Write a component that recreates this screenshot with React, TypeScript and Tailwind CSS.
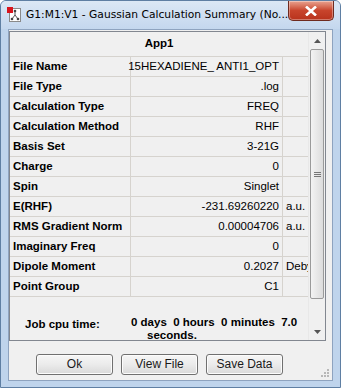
const rows: [string, string, string][] = [
  ["File Name", "15HEXADIENE_ ANTI1_OPT", ""],
  ["File Type", ".log", ""],
  ["Calculation Type", "FREQ", ""],
  ["Calculation Method", "RHF", ""],
  ["Basis Set", "3-21G", ""],
  ["Charge", "0", ""],
  ["Spin", "Singlet", ""],
  ["E(RHF)", "-231.69260220", "a.u."],
  ["RMS Gradient Norm", "0.00004706", "a.u."],
  ["Imaginary Freq", "0", ""],
  ["Dipole Moment", "0.2027", "Debye"],
  ["Point Group", "C1", ""],
];

function AppIcon() {
  return (
    <svg width="16" height="16" viewBox="0 0 16 16">
      <rect x="2.5" y="1.5" width="11" height="13" fill="#fff" stroke="#8a8a8a" />
      <line x1="8" y1="4" x2="8" y2="8" stroke="#555" />
      <line x1="8" y1="8" x2="5" y2="12" stroke="#555" />
      <line x1="8" y1="8" x2="11" y2="12" stroke="#555" />
      <circle cx="8" cy="4" r="1.3" fill="#444" />
      <circle cx="5" cy="12" r="1.3" fill="#444" />
      <circle cx="11" cy="12" r="1.3" fill="#444" />
      <rect x="0" y="0" width="6" height="6" fill="#d8141c" />
    </svg>
  );
}

function Btn({ label }: { label: string }) {
  return (
    <button className="w-[77px] h-[21px] rounded-[3px] border border-[#707070] bg-gradient-to-b from-[#f6f6f6] via-[#ebebeb] to-[#d9d9d9] text-[12px] text-[#1a1a1a] shadow-[inset_0_0_0_1px_#fcfcfc]">
      {label}
    </button>
  );
}

export default function App() {
  return (
    <div
      className="w-[341px] h-[388px] overflow-hidden bg-[#bfd4ec] flex flex-col rounded-t-[6px] border border-[#5f7fa3]"
      style={{ fontFamily: '"Liberation Sans", Arial, sans-serif' }}
    >
      <div className="h-[28px] shrink-0 flex items-start pl-[6px] pr-[6px] bg-gradient-to-b from-[#dce8f5] to-[#c4d7ee]">
        <div className="mt-[6px] shrink-0"><AppIcon /></div>
        <div className="mt-[6px] ml-[3px] text-black whitespace-nowrap overflow-hidden" style={{ fontFamily: '"DejaVu Sans", sans-serif', fontSize: "10.7px" }}>
          G1:M1:V1 - Gaussian Calculation Summary (No...
        </div>
        <div className="ml-auto shrink-0 w-[46px] h-[20px] rounded-b-[5px] border border-t-0 border-[#6e2a1f] bg-gradient-to-b from-[#e8a290] via-[#c8442c] to-[#b8321c] flex items-center justify-center shadow-[inset_0_0_0_1px_rgba(255,255,255,0.35)]">
          <svg width="12" height="10" viewBox="0 0 12 10">
            <path d="M1 0.5 L11 9.5 M11 0.5 L1 9.5" stroke="#fff" strokeWidth="2.6" />
          </svg>
        </div>
      </div>
      <div className="flex-1 mx-[7px] mb-[6px] bg-[#f0f0f0] border border-[#8ea3bf] flex flex-col">
        <div className="mt-[1px] mr-[6px] h-[310px] shrink-0 border border-[#828790] bg-[#f0f0f0] flex overflow-hidden">
          <div className="flex-1 flex flex-col text-[11.5px] overflow-hidden">
            <div className="h-[25px] shrink-0 flex items-center justify-center font-bold border-b border-[#d6d3ce]">App1</div>
            {rows.map(([k, v, u]) => (
              <div key={k} className="h-[20px] shrink-0 flex border-b border-[#d6d3ce]">
                <div className="w-[121px] shrink-0 pl-[3px] font-bold flex items-center border-r border-[#d6d3ce] whitespace-nowrap">{k}</div>
                <div className="w-[152px] shrink-0 pr-[3px] flex items-center justify-end border-r border-[#d6d3ce] whitespace-nowrap">{v}</div>
                <div className="flex-1 pl-[3px] flex items-center whitespace-nowrap overflow-hidden">{u}</div>
              </div>
            ))}
            <div className="flex shrink-0 pt-[19px] text-[11.5px] font-bold">
              <div className="w-[121px] shrink-0 pl-[15px]">Job cpu time:</div>
              <div className="flex flex-col leading-[13px]">
                <div className="whitespace-pre">0 days  0 hours  0 minutes  7.0</div>
                <div className="pl-[16px]">seconds.</div>
              </div>
            </div>
          </div>
          <div className="w-[17px] shrink-0 flex flex-col bg-[#f0f0f0] border-l border-[#e8e8e8]">
            <div className="h-[17px] shrink-0 flex items-center justify-center">
              <svg width="7" height="4" viewBox="0 0 7 4"><path d="M3.5 0 L7 4 L0 4 Z" fill="#555" /></svg>
            </div>
            <div className="h-[250px] shrink-0 mx-[1px] rounded-[2px] border border-[#9a9a9a] bg-gradient-to-r from-[#f3f3f3] to-[#dcdcdc] flex items-center justify-center">
              <svg width="7" height="7" viewBox="0 0 7 7">
                <path d="M0 1.5 H7 M0 3.5 H7 M0 5.5 H7" stroke="#777" />
              </svg>
            </div>
            <div className="flex-1" />
            <div className="h-[17px] shrink-0 flex items-center justify-center">
              <svg width="7" height="4" viewBox="0 0 7 4"><path d="M0 0 L7 0 L3.5 4 Z" fill="#555" /></svg>
            </div>
          </div>
        </div>
        <div className="flex-1 flex items-center pl-[27px] gap-[8px] pt-[7px] relative">
          <Btn label="Ok" />
          <Btn label="View File" />
          <Btn label="Save Data" />
          <svg className="absolute right-[3px] bottom-[3px]" width="10" height="10" viewBox="0 0 10 10">
            <g fill="#b8b8b8">
              <rect x="8" y="2" width="2" height="2" />
              <rect x="5" y="5" width="2" height="2" />
              <rect x="8" y="5" width="2" height="2" />
              <rect x="2" y="8" width="2" height="2" />
              <rect x="5" y="8" width="2" height="2" />
              <rect x="8" y="8" width="2" height="2" />
            </g>
          </svg>
        </div>
      </div>
    </div>
  );
}
